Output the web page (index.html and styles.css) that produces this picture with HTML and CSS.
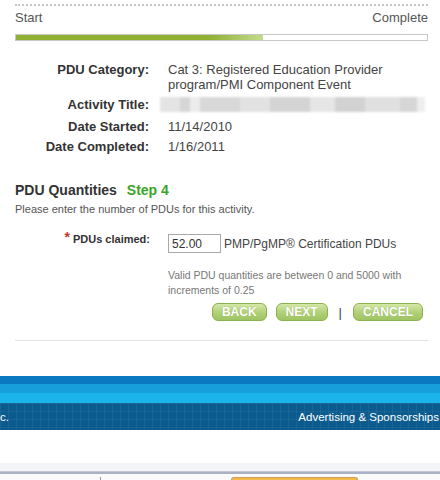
FILE: index.html
```html
<!DOCTYPE html>
<html lang="en">
<head>
    <meta charset="UTF-8">
    <meta name="viewport" content="width=device-width, initial-scale=1.0">
    <title>PDU Claim - Step 4</title>
    <link rel="stylesheet" href="styles.css">
</head>
<body>
    <div class="wizard">
        <div class="dots"></div>
        <div class="progress-labels">
            <span>Start</span>
            <span>Complete</span>
        </div>
        <div class="progress">
            <div class="progress-fill" style="width: 60%;"></div>
        </div>

        <div class="details">
            <div class="label">PDU Category:</div>
            <div class="value">Cat 3: Registered Education Provider program/PMI Component Event</div>
            <div class="label">Activity Title:</div>
            <div class="value"><div class="hidden-title"></div></div>
            <div class="label">Date Started:</div>
            <div class="value">11/14/2010</div>
            <div class="label">Date Completed:</div>
            <div class="value">1/16/2011</div>
        </div>

        <h2 class="section-title">PDU Quantities <span class="step">Step 4</span></h2>
        <p class="intro">Please enter the number of PDUs for this activity.</p>

        <div class="claim-row">
            <label class="claim-label" for="pdus"><span class="req">*</span>PDUs claimed:</label>
            <div class="claim-field">
                <div class="claim-input">
                    <input id="pdus" type="text" value="52.00">
                    <span>PMP/PgMP&reg; Certification PDUs</span>
                </div>
                <p class="note">Valid PDU quantities are between 0 and 5000 with increments of 0.25</p>
            </div>
        </div>

        <div class="actions">
            <button class="btn">BACK</button>
            <button class="btn">NEXT</button>
            <span class="sep">|</span>
            <button class="btn">CANCEL</button>
        </div>

        <div class="rule"></div>
    </div>

    <div class="footer">
        <div class="band band-1"></div>
        <div class="band band-2"></div>
        <div class="band band-3"></div>
        <div class="footer-bar">
            <span>c.</span>
            <span>Advertising &amp; Sponsorships</span>
        </div>
    </div>

    <div class="window-bottom">
        <div class="strip"></div>
        <div class="frame"></div>
        <div class="tabs">
            <div class="tab"></div>
            <div class="tab tab-active"></div>
        </div>
    </div>
</body>
</html>
```

FILE: styles.css
```css
body {
    margin: 0;
    font-family: "Liberation Sans", Arial, sans-serif;
    color: #333;
    background-color: white;
    width: 440px;
    overflow: hidden;
}

.wizard {
    padding: 4px 12px 0 15px;
}

.dots {
    border-top: 2px dotted #c4c4c4;
}

.progress-labels {
    display: flex;
    justify-content: space-between;
    margin-top: 4px;
    font-size: 13px;
    color: #555;
}

.progress {
    margin-top: 9px;
    height: 5px;
    border: 1px solid #c8c8c8;
    background-color: white;
}

.progress-fill {
    height: 100%;
    background: linear-gradient(to right, #8fb033 0%, #8fb033 78%, #c3db8c 100%);
}

.details {
    display: grid;
    grid-template-columns: 134px 250px;
    column-gap: 19px;
    row-gap: 5px;
    margin-top: 21px;
    font-size: 13px;
    line-height: 15px;
}

.label {
    text-align: right;
    font-weight: bold;
    color: #333;
}

.value {
    color: #444;
}

/* the activity title row is a bit taller than the others */
.details .label:nth-child(3),
.details .value:nth-child(4) {
    padding-bottom: 2px;
}

.hidden-title {
    height: 15px;
    width: 265px;
    margin-left: -8px;
    background: linear-gradient(to right,
        #e4e4e4 0, #e4e4e4 20px, #d6d6d6 20px, #d6d6d6 30px,
        #ececec 30px, #ececec 40px, #d8d8d8 40px, #d8d8d8 80px,
        #e2e2e2 80px, #e2e2e2 110px, #d4d4d4 110px, #d4d4d4 150px,
        #e6e6e6 150px, #e6e6e6 175px, #d2d2d2 175px, #d2d2d2 205px,
        #e0e0e0 205px, #e0e0e0 240px, #d6d6d6 240px, #d6d6d6 257px, #eeeeee 257px);
    filter: blur(1px);
}

.section-title {
    margin: 28px 0 0;
    font-size: 14px;
    font-weight: bold;
    color: #333;
}

.step {
    color: #3aa52a;
    margin-left: 6px;
}

.intro {
    margin: 5px 0 0;
    font-size: 11px;
    color: #555;
}

.claim-row {
    display: flex;
    margin-top: 14px;
}

.claim-label {
    width: 135px;
    text-align: right;
    font-size: 11px;
    font-weight: bold;
    color: #333;
}

.req {
    color: #c0392b;
    font-size: 14px;
    margin-right: 3px;
    vertical-align: 1px;
}

.claim-field {
    margin-left: 18px;
}

.claim-input {
    display: flex;
    align-items: center;
    margin-top: 5px;
    font-size: 12px;
    color: #444;
}

.claim-input input {
    width: 45px;
    height: 15px;
    padding: 1px 3px;
    border: 1px solid #aaa;
    font-family: inherit;
    font-size: 12px;
    color: #333;
    margin: 0 3px 0 0;
}

.note {
    margin: 15px 0 0;
    width: 240px;
    font-size: 10.5px;
    line-height: 15px;
    color: #777;
}

.actions {
    display: flex;
    justify-content: flex-end;
    align-items: center;
    gap: 9px;
    margin-top: 5px;
    padding-right: 5px;
}

.btn {
    height: 18px;
    padding: 0 9px;
    border: 1px solid #8fb04f;
    border-radius: 6px;
    background: linear-gradient(to bottom, #d4e8a8 0%, #b3d27a 50%, #9fc462 100%);
    color: white;
    font-family: inherit;
    font-size: 12px;
    font-weight: bold;
    text-shadow: 0 0 1px #8aa650;
    cursor: pointer;
}

.sep {
    font-size: 13px;
    color: #444;
    margin: 0 2px;
}

.rule {
    margin-top: 19px;
    border-top: 1px solid #e2e2e2;
}

.footer {
    margin-top: 35px;
}

.band {
    height: 8px;
}

.band-1 {
    background-color: #0b79c2;
}

.band-2 {
    height: 9px;
    background-color: #169fdb;
}

.band-3 {
    height: 10px;
    background-color: #1ab3ea;
}

.footer-bar {
    display: flex;
    justify-content: space-between;
    align-items: center;
    height: 27px;
    padding-right: 1px;
    font-size: 11.5px;
    color: white;
    background-color: #0b5b8e;
    background-image:
        linear-gradient(to right, rgba(255,255,255,0.05) 1px, transparent 1px),
        linear-gradient(to bottom, rgba(255,255,255,0.05) 1px, transparent 1px);
    background-size: 8px 8px;
}

.window-bottom {
    margin-top: 33px;
}

.strip {
    height: 8px;
    background-color: #f3f5f9;
}

.frame {
    height: 2px;
    border-top: 1px solid #c3c8d4;
    background-color: #a9b1c3;
}

.tabs {
    display: flex;
    height: 10px;
    padding-top: 3px;
    background-color: #fafafa;
}

.tab {
    width: 130px;
    margin-left: 100px;
    border-left: 1px solid #9a9a9a;
}

.tab-active {
    width: 125px;
    margin-left: 0;
    background-color: #f5b94a;
    border: 1px solid #c9a15a;
    border-bottom: none;
    border-radius: 3px 3px 0 0;
}
```
